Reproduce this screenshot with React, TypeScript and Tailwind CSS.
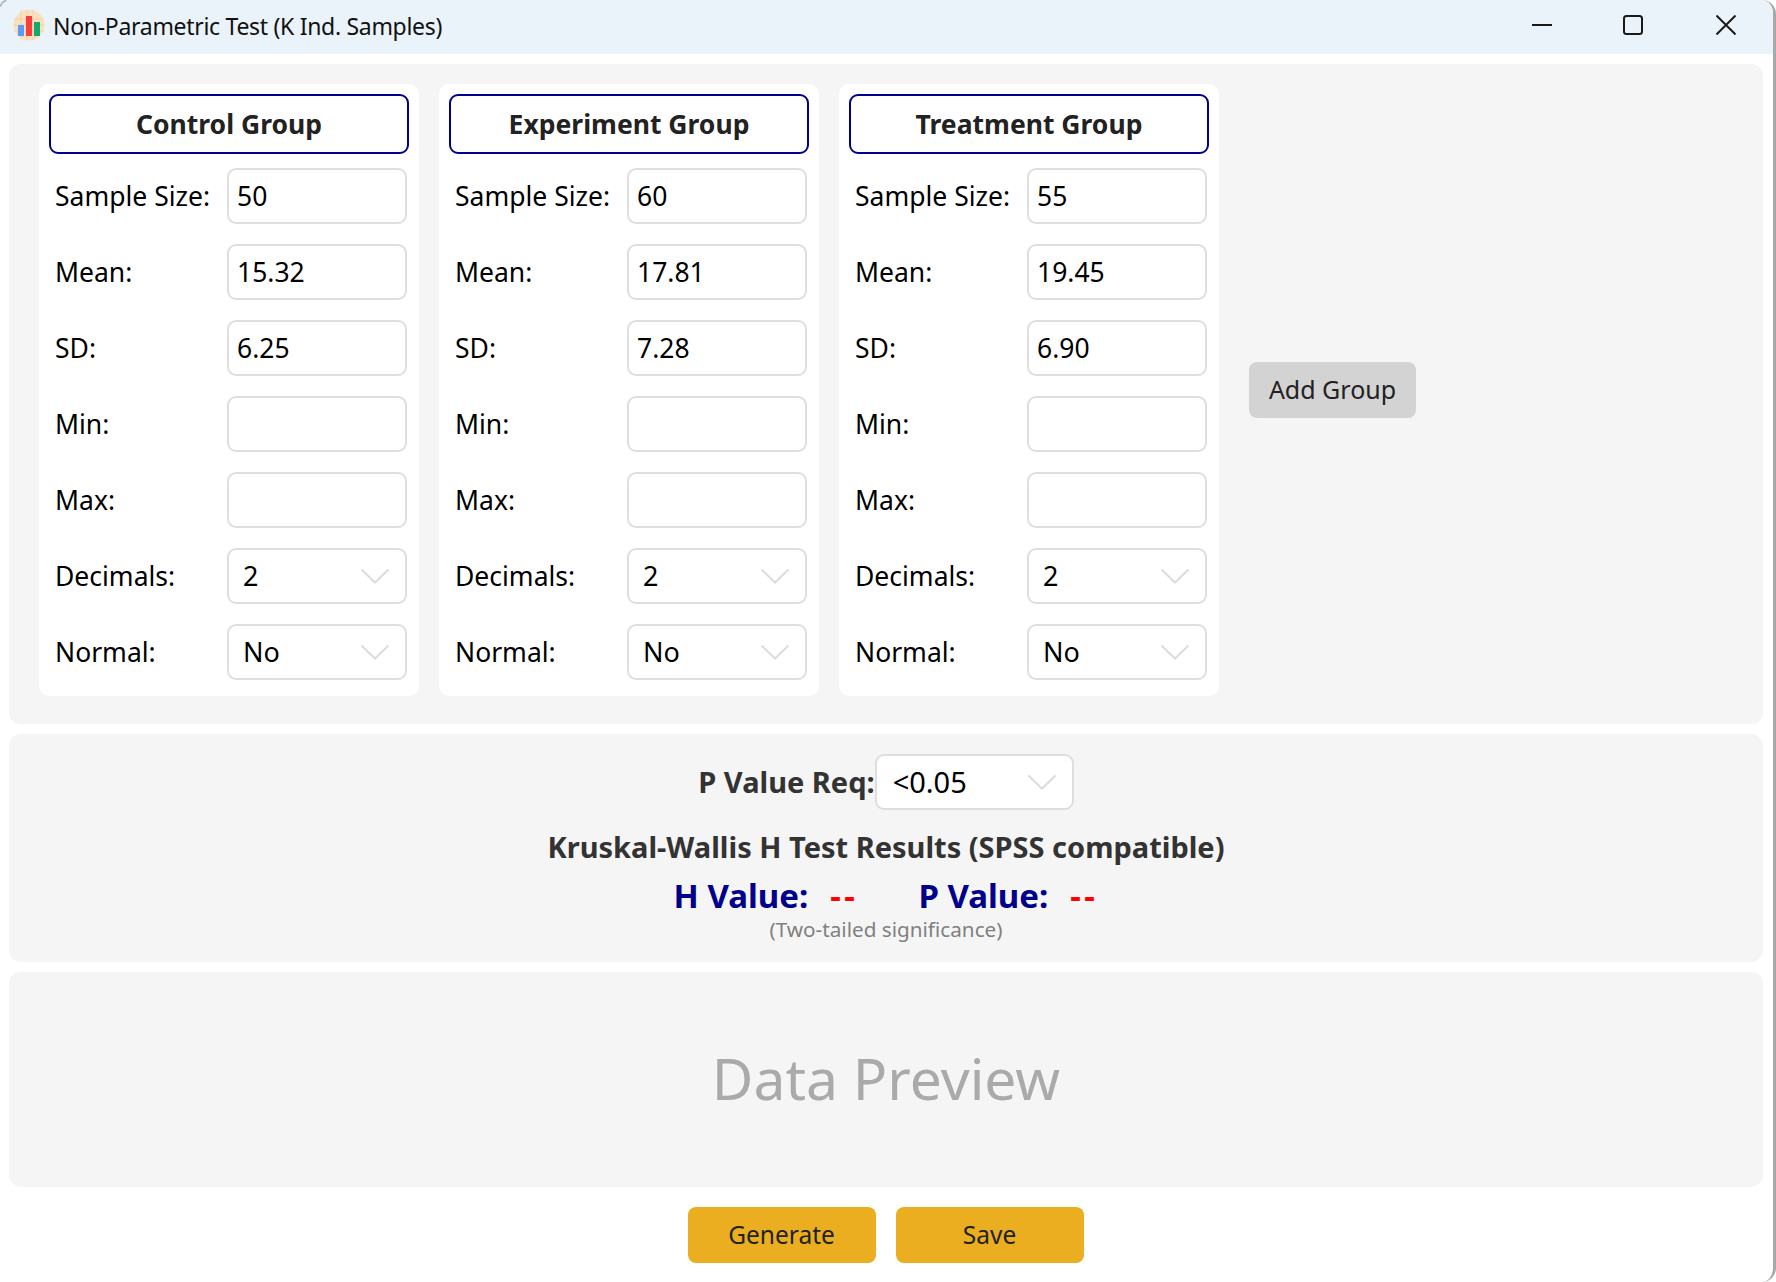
import React from "react";

type Group = { name: string; size: string; mean: string; sd: string };

const groups: Group[] = [
  { name: "Control Group", size: "50", mean: "15.32", sd: "6.25" },
  { name: "Experiment Group", size: "60", mean: "17.81", sd: "7.28" },
  { name: "Treatment Group", size: "55", mean: "19.45", sd: "6.90" },
];

function Chevron() {
  return (
    <svg width="30" height="16" viewBox="0 0 30 16" fill="none" className="shrink-0">
      <path d="M1.5 1.5 L15 14.5 L28.5 1.5" stroke="#dcdcdc" strokeWidth="2" />
    </svg>
  );
}

function FieldRow({ label, children }: { label: string; children: React.ReactNode }) {
  return (
    <div className="flex items-center h-[56px]">
      <div className="w-[178px] pl-[6px] pt-[2px] text-[26.5px] text-black">{label}</div>
      {children}
    </div>
  );
}

function TextField({ value }: { value: string }) {
  return (
    <input
      readOnly
      value={value}
      className="w-[180px] h-[56px] px-[8px] border-2 border-[#dedede] rounded-[9px] bg-white text-[26.5px] text-black outline-none"
    />
  );
}

function Select({ value, wide }: { value: string; wide?: boolean }) {
  return (
    <div
      className={
        "h-[56px] pr-[15px] flex items-center justify-between border-2 border-[#dedede] rounded-[9px] bg-white text-black " +
        (wide ? "w-[199px] pl-[16px] text-[29px]" : "w-[180px] pl-[14px] text-[27px]")
      }
    >
      <span>{value}</span>
      <Chevron />
    </div>
  );
}

function GroupCard({ group }: { group: Group }) {
  return (
    <div className="w-[380px] bg-white rounded-[10px] pt-[10px] px-[10px] pb-[16px]">
      <div className="h-[60px] pt-[2px] flex items-center justify-center border-2 border-[#00008b] rounded-[9px] text-[26.5px] font-bold text-[#222]">
        {group.name}
      </div>
      <div className="mt-[14px] flex flex-col gap-[20px]">
        <FieldRow label="Sample Size:"><TextField value={group.size} /></FieldRow>
        <FieldRow label="Mean:"><TextField value={group.mean} /></FieldRow>
        <FieldRow label="SD:"><TextField value={group.sd} /></FieldRow>
        <FieldRow label="Min:"><TextField value="" /></FieldRow>
        <FieldRow label="Max:"><TextField value="" /></FieldRow>
        <FieldRow label="Decimals:"><Select value="2" /></FieldRow>
        <FieldRow label="Normal:"><Select value="No" /></FieldRow>
      </div>
    </div>
  );
}

function AppIcon() {
  return (
    <svg width="32" height="32" viewBox="0 0 32 32" className="shrink-0 mb-[4px]">
      <circle cx="16" cy="16" r="15.5" fill="#fbe0c0" />
      <path d="M1 10H31M1 16H31M1 22H31M8 1V31M14 1V31M20 1V31" stroke="#e6c9a6" strokeWidth="0.6" />
      <rect x="5" y="16" width="6" height="11" fill="#5b9bf5" />
      <rect x="13" y="7" width="6" height="20" fill="#f93c3c" />
      <rect x="21" y="13" width="6" height="14" fill="#12ab6c" />
    </svg>
  );
}

export default function App() {
  return (
    <div className="relative w-[1776px] h-[1282px] overflow-hidden bg-white font-['Noto_Sans',sans-serif]">
      <svg width="8" height="8" viewBox="0 0 8 8" fill="none" className="absolute left-0 top-0 z-10">
        <path d="M0.5 6.5 Q1.5 1.5 6.5 0.5" stroke="#b0b0b0" strokeWidth="1.5" />
      </svg>
      <div className="h-full border-r-[3px] border-[#a8a8a8] rounded-r-[14px] overflow-hidden">
        <div className="h-[54px] bg-[#eaf3f9] flex items-center pl-[13px]">
          <AppIcon />
          <span className="ml-[8px] mb-[2px] text-[23px] tracking-[-0.3px] text-[#111]">
            Non-Parametric Test (K Ind. Samples)
          </span>
          <div className="ml-auto mb-[4px] flex items-center pr-[37px]">
            <svg width="20" height="4" viewBox="0 0 20 4" className="mr-[71px]">
              <path d="M0 2H20" stroke="#1a1a1a" strokeWidth="2" />
            </svg>
            <svg width="20" height="20" viewBox="0 0 20 20" fill="none" className="mr-[73px]">
              <rect x="1" y="1" width="18" height="18" rx="2.5" stroke="#1a1a1a" strokeWidth="2" />
            </svg>
            <svg width="20" height="20" viewBox="0 0 20 20" fill="none">
              <path d="M0.5 0.5L19.5 19.5M19.5 0.5L0.5 19.5" stroke="#1a1a1a" strokeWidth="2" />
            </svg>
          </div>
        </div>

        <div className="pl-[9px] pr-[10px] pt-[10px] flex flex-col gap-[10px]">
          <div className="h-[660px] bg-[#f5f5f5] rounded-[12px] pl-[30px] pt-[20px] flex items-start">
            {groups.map((g, i) => (
              <div key={g.name} className={i > 0 ? "ml-[20px]" : ""}>
                <GroupCard group={g} />
              </div>
            ))}
            <div className="ml-[30px] h-[612px] flex items-center">
              <div className="w-[167px] h-[56px] bg-[#d3d3d3] rounded-[8px] flex items-center justify-center text-[25px] text-[#222]">
                Add Group
              </div>
            </div>
          </div>

          <div className="h-[228px] bg-[#f5f5f5] rounded-[12px] pt-[20px] flex flex-col items-center">
            <div className="flex items-center">
              <span className="text-[29px] font-bold text-[#333]">P Value Req:</span>
              <Select value="<0.05" wide />
            </div>
            <div className="mt-[17px] text-[29px] leading-[40px] font-bold text-[#333]">
              Kruskal-Wallis H Test Results (SPSS compatible)
            </div>
            <div className="mt-[7px] flex items-center text-[33px] leading-[44px] font-bold">
              <span className="text-[#00008b]">H Value:</span>
              <span className="ml-[22px] tracking-[3.5px] text-[#ff0000]">--</span>
              <span className="ml-[60px] text-[#00008b]">P Value:</span>
              <span className="ml-[22px] tracking-[3.5px] text-[#ff0000]">--</span>
            </div>
            <div className="-mt-[1px] text-[20.7px] leading-[24px] text-[#808080]">(Two-tailed significance)</div>
          </div>

          <div className="h-[215px] bg-[#f5f5f5] rounded-[12px] pb-[1px] flex items-center justify-center text-[57px] text-[#aaaaaa]">
            Data Preview
          </div>
        </div>

        <div className="mt-[20px] pr-[2px] flex justify-center gap-[20px]">
          <div className="w-[188px] h-[56px] bg-[#eaae20] rounded-[8px] flex items-center justify-center text-[24.5px] text-[#222]">
            Generate
          </div>
          <div className="w-[188px] h-[56px] bg-[#eaae20] rounded-[8px] flex items-center justify-center text-[24.5px] text-[#222]">
            Save
          </div>
        </div>
      </div>
    </div>
  );
}
